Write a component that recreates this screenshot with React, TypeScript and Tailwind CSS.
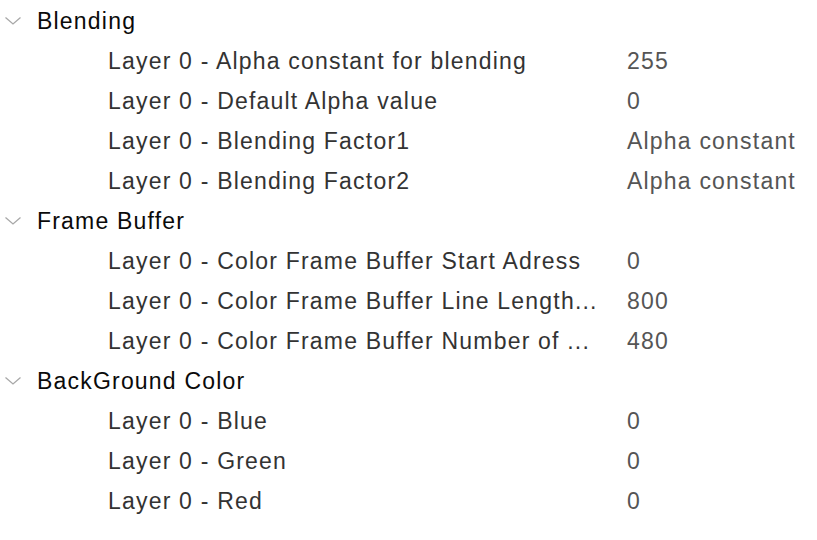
import React from "react";

type Item = { label: string; value: string };
type Group = { title: string; items: Item[] };

const groups: Group[] = [
  {
    title: "Blending",
    items: [
      { label: "Layer 0 - Alpha constant for blending", value: "255" },
      { label: "Layer 0 - Default Alpha value", value: "0" },
      { label: "Layer 0 - Blending Factor1", value: "Alpha constant" },
      { label: "Layer 0 - Blending Factor2", value: "Alpha constant" },
    ],
  },
  {
    title: "Frame Buffer",
    items: [
      { label: "Layer 0 - Color Frame Buffer Start Adress", value: "0" },
      { label: "Layer 0 - Color Frame Buffer Line Length...", value: "800" },
      { label: "Layer 0 - Color Frame Buffer Number of ...", value: "480" },
    ],
  },
  {
    title: "BackGround Color",
    items: [
      { label: "Layer 0 - Blue", value: "0" },
      { label: "Layer 0 - Green", value: "0" },
      { label: "Layer 0 - Red", value: "0" },
    ],
  },
];

function Chevron() {
  return (
    <svg width="18" height="10" viewBox="0 0 18 10" className="shrink-0">
      <path d="M1.5 1.5 L9 8 L16.5 1.5" fill="none" stroke="#a8a8a8" strokeWidth="1.3" />
    </svg>
  );
}

export default function App() {
  return (
    <div
      className="w-[817px] h-[540px] bg-white overflow-hidden text-[23px] tracking-[1.2px] pt-[1px]"
      style={{ fontFamily: '"Liberation Sans", Arial, sans-serif' }}
    >
      {groups.map((g) => (
        <div key={g.title}>
          <div className="h-[40px] flex items-center pl-[4px] text-[#0a0a0a]">
            <Chevron />
            <span className="ml-[15px]">{g.title}</span>
          </div>
          {g.items.map((it) => (
            <div key={it.label} className="h-[40px] flex items-center">
              <div className="pl-[108px] w-[627px] shrink-0 whitespace-nowrap text-[#333]">
                {it.label}
              </div>
              <div className="text-[#555]">{it.value}</div>
            </div>
          ))}
        </div>
      ))}
    </div>
  );
}
